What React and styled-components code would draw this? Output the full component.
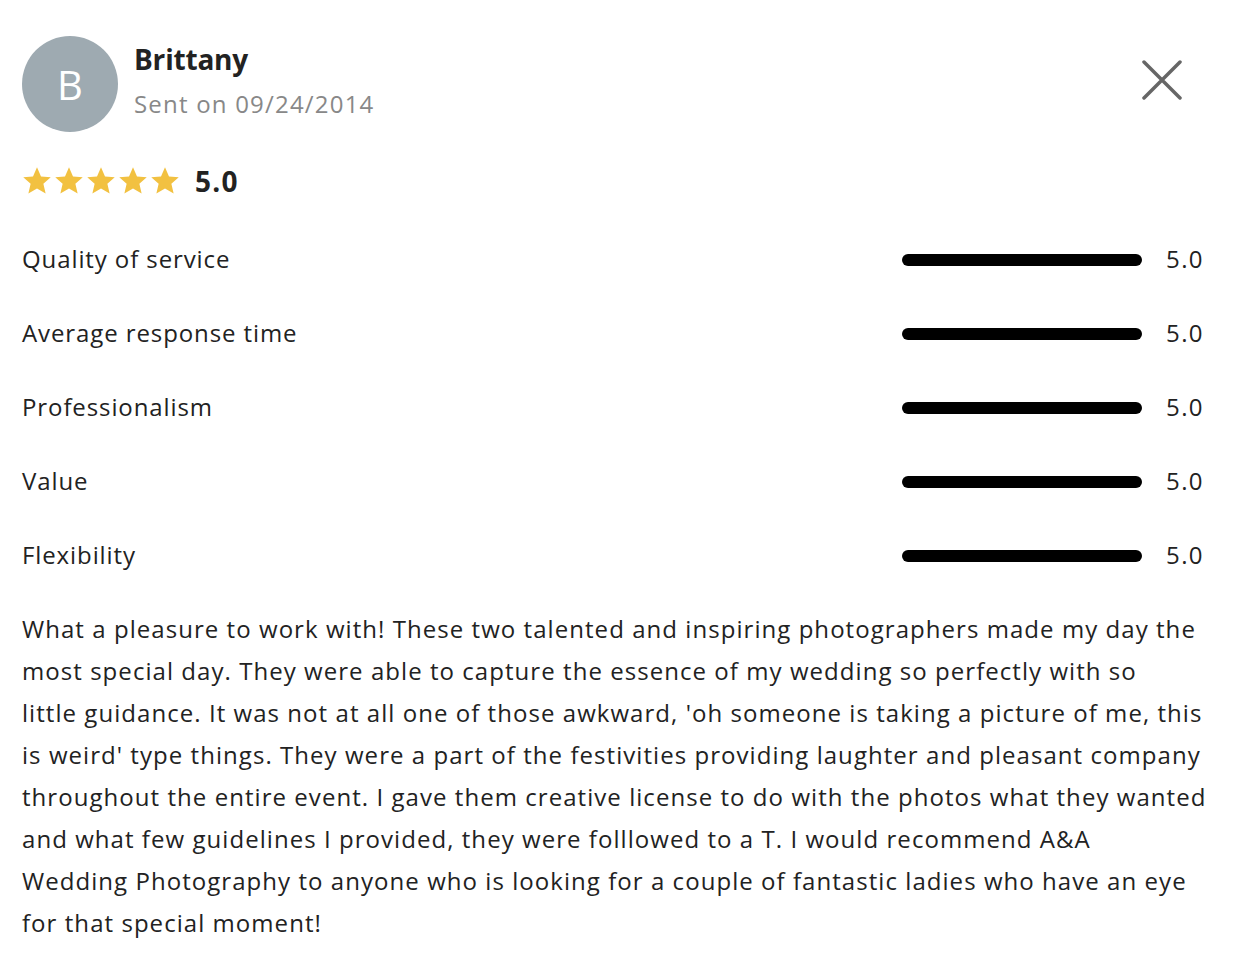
import React from "react";
import styled, { createGlobalStyle } from "styled-components";

const GlobalStyle = createGlobalStyle`
    body {
        margin: 0;
        background: #ffffff;
        font-family: "Open Sans", "Liberation Sans", sans-serif;
        color: #222222;
        letter-spacing: 0.9px;
    }
`;

const Page = styled.div`
    padding: 36px 32px 20px 22px;
`;

const Header = styled.div`
    display: flex;
    align-items: flex-start;
`;

const Avatar = styled.div`
    width: 96px;
    height: 96px;
    border-radius: 50%;
    background: #9eaab1;
    color: #ffffff;
    font-size: 40px;
    letter-spacing: 0;
    display: flex;
    align-items: center;
    justify-content: center;
    flex-shrink: 0;
`;

const Who = styled.div`
    margin-left: 16px;
    flex: 1;
`;

const Name = styled.div`
    font-size: 28px;
    font-weight: 700;
    line-height: 40px;
    margin-top: 3px;
    letter-spacing: -0.2px;
`;

const Sent = styled.div`
    font-size: 24px;
    color: #888888;
    line-height: 34px;
    margin-top: 8px;
    letter-spacing: 1.2px;
`;

const CloseButton = styled.button`
    background: none;
    border: none;
    padding: 0;
    margin: 24px 22px 0 0;
    cursor: pointer;
    display: flex;
`;

const Overall = styled.div`
    display: flex;
    align-items: center;
    margin-top: 30px;
    margin-bottom: 21px;
`;

const Stars = styled.div`
    display: flex;
    gap: 2px;
    margin-right: 15px;
`;

const Score = styled.div`
    font-size: 28px;
    font-weight: 700;
    letter-spacing: 1.2px;
`;

const Rows = styled.div`
    display: flex;
    flex-direction: column;
`;

const Row = styled.div`
    display: flex;
    align-items: center;
    height: 74px;
    font-size: 24px;
`;

const Label = styled.div`
    flex: 1;
`;

const Bar = styled.div`
    width: 240px;
    height: 12px;
    border-radius: 6px;
    background: #000000;
    margin-right: 18px;
    margin-top: 3px;
`;

const Value = styled.div`
    width: 44px;
    text-align: right;
    letter-spacing: 1.4px;
`;

const Body = styled.p`
    margin: 17px 0 0;
    font-size: 24px;
    line-height: 42px;
    letter-spacing: 1.05px;
`;

const Line = styled.span`
    display: block;
    white-space: nowrap;
`;

const Star = () => (
    <svg width="30" height="30" viewBox="0 0 24 24">
        <path
            fill="#f2c141"
            d="M12 1l3.2 7.3 7.8.7-5.9 5.2 1.8 7.8L12 17.9l-6.9 4.1 1.8-7.8L1 9l7.8-.7z"
        />
    </svg>
);

const ratings = [
    "Quality of service",
    "Average response time",
    "Professionalism",
    "Value",
    "Flexibility",
];

const review = [
    "What a pleasure to work with! These two talented and inspiring photographers made my day the",
    "most special day. They were able to capture the essence of my wedding so perfectly with so",
    "little guidance. It was not at all one of those awkward, 'oh someone is taking a picture of me, this",
    "is weird' type things. They were a part of the festivities providing laughter and pleasant company",
    "throughout the entire event. I gave them creative license to do with the photos what they wanted",
    "and what few guidelines I provided, they were folllowed to a T. I would recommend A&A",
    "Wedding Photography to anyone who is looking for a couple of fantastic ladies who have an eye",
    "for that special moment!",
];

const App = () => (
    <Page>
        <GlobalStyle />
        <Header>
            <Avatar>B</Avatar>
            <Who>
                <Name>Brittany</Name>
                <Sent>Sent on 09/24/2014</Sent>
            </Who>
            <CloseButton aria-label="Close">
                <svg width="40" height="40" viewBox="0 0 40 40">
                    <path d="M2 2L38 38M38 2L2 38" stroke="#666666" strokeWidth="3.5" strokeLinecap="round" />
                </svg>
            </CloseButton>
        </Header>
        <Overall>
            <Stars>
                {[0, 1, 2, 3, 4].map((i) => (
                    <Star key={i} />
                ))}
            </Stars>
            <Score>5.0</Score>
        </Overall>
        <Rows>
            {ratings.map((r) => (
                <Row key={r}>
                    <Label>{r}</Label>
                    <Bar />
                    <Value>5.0</Value>
                </Row>
            ))}
        </Rows>
        <Body>
            {review.map((l, i) => (
                <Line key={i}>{l}</Line>
            ))}
        </Body>
    </Page>
);

export default App;
